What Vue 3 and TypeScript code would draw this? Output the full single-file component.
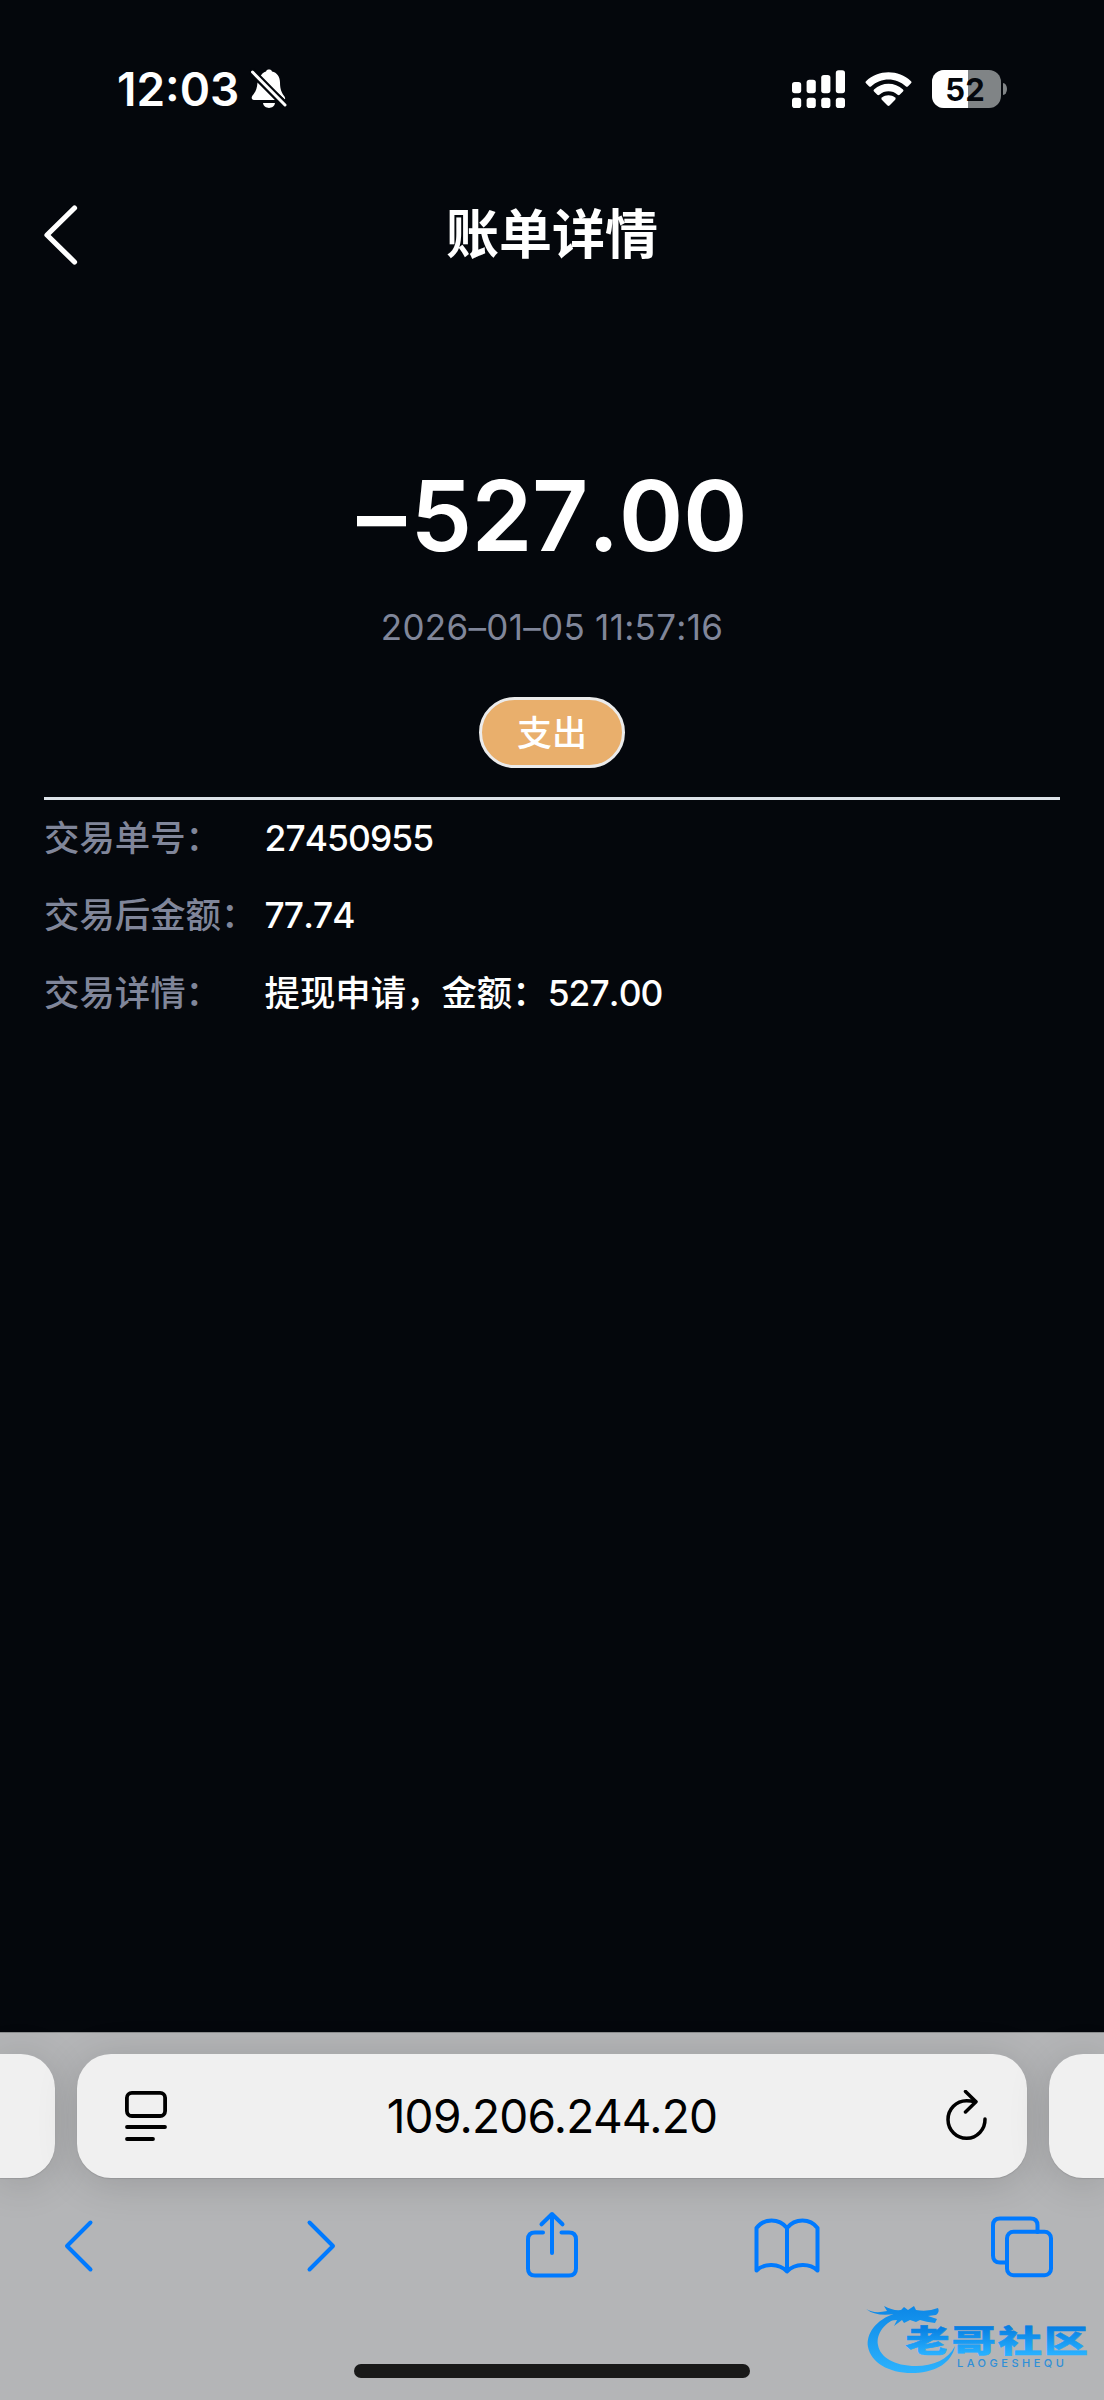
<template>
  <div class="page">
    <div class="status-bar">
      <div class="status-left">
        <span class="status-time">12:03</span>
        <svg
          class="icon-bell"
          width="40"
          height="42"
          viewBox="0 0 40 42"
        >
          <path
            d="M11 9.500C12 6 14.500 4 17 3.500C17.500 2 18.500 1.500 20 1.500S22.500 2 23 3.500C28 4.500 31 9 31 14.500C31 22 33 25 35.500 28.500Q36.500 30 36 31.500Z"
            fill="#fff"
          />
          <path
            d="M8.500 14.500L26 32H5C2.500 32 2 29.500 3.500 27.500C6.500 24 8 21 8.500 14.500Z"
            fill="#fff"
          />
          <path
            d="M14 35H26C25 41.500 15 41.500 14 35Z"
            fill="#fff"
          />
          <path
            d="M3.500 4L36 37"
            stroke="#04070c"
            stroke-width="7"
            stroke-linecap="round"
          />
          <path
            d="M3.500 4L36 37"
            stroke="#fff"
            stroke-width="3"
            stroke-linecap="round"
          />
        </svg>
      </div>
      <div class="status-right">
        <svg
          width="53"
          height="38"
          viewBox="0 0 53 38"
          fill="#fff"
        >
          <template
            v-for="(bar, idx) in signalBars"
            :key="idx"
          >
            <rect
              :x="idx * 14.6"
              :y="bar"
              width="9.2"
              :height="23.3 - bar"
              rx="2.8"
            />
            <rect
              :x="idx * 14.6"
              y="27.800"
              width="9.200"
              height="10.200"
              rx="2.800"
            />
          </template>
        </svg>
        <svg
          class="icon-wifi"
          width="47"
          height="35"
          viewBox="0 0 47 35"
          fill="#fff"
        >
          <path d="M1 9.200C13.500-2.700 33.500-2.700 46 9.200Q47 10.300 46 11.300L42.800 14.400Q41.800 15.300 40.700 14.300C31 5.200 16 5.200 6.300 14.300Q5.200 15.300 4.200 14.400L1 11.300Q0 10.300 1 9.200Z" />
          <path d="M9 17.400C17.200 9.800 29.800 9.800 38 17.400Q39 18.500 38 19.500L34.700 22.700Q33.700 23.600 32.600 22.700C27.500 18.200 19.500 18.200 14.400 22.700Q13.300 23.600 12.300 22.700L9 19.500Q8 18.500 9 17.400Z" />
          <path d="M16.900 25.600C20.700 22.500 26.300 22.500 30.100 25.600Q31.200 26.600 30.200 27.700L24.500 33.500Q23.500 34.400 22.500 33.500L16.800 27.700Q15.800 26.600 16.900 25.600Z" />
        </svg>
        <div class="battery">
          <div class="battery-body">
            <div
              class="battery-level"
              :style="{ width: `${batteryLevel}%` }"
            />
            <span class="battery-text">{{ batteryLevel }}</span>
          </div>
          <div class="battery-cap" />
        </div>
      </div>
    </div>

    <header class="nav">
      <svg
        class="nav-back"
        width="34"
        height="60"
        viewBox="0 0 34 60"
        fill="none"
        stroke="#fff"
        stroke-width="5.200"
        stroke-linecap="round"
        stroke-linejoin="round"
      >
        <path d="M30.500 3L3 30L30.500 57" />
      </svg>
      <h1 class="nav-title">账单详情</h1>
    </header>

    <main class="bill">
      <div class="bill-amount"><span class="amount-sign">–</span>{{ bill.amount }}</div>
      <div class="bill-time">{{ bill.time }}</div>
      <div class="bill-type">{{ bill.type }}</div>
      <div class="bill-detail">
        <div
          v-for="row in rows"
          :key="row.label"
          class="bill-row"
        >
          <span class="row-label">{{ row.label }}</span>
          <span v-if="row.text">{{ row.text }}</span>
          <span class="row-figure">{{ row.figure }}</span>
        </div>
      </div>
    </main>

    <footer class="browser">
      <div class="tabs">
        <div class="tab tab-prev" />
        <div class="tab tab-current">
          <svg
            width="42"
            height="52"
            viewBox="0 0 42 52"
            fill="none"
            stroke="#000"
            stroke-width="3.800"
            stroke-linecap="round"
          >
            <rect
              x="1.900"
              y="2.800"
              width="38.200"
              height="23.200"
              rx="5"
            />
            <path d="M2 37H40M2 49H28" />
          </svg>
          <span class="tab-host">{{ host }}</span>
          <svg
            width="42"
            height="52"
            viewBox="0 0 42 52"
            fill="none"
            stroke="#000"
            stroke-width="3.500"
            stroke-linecap="round"
            stroke-linejoin="round"
          >
            <path d="M19.500 1.500L30 11.800L19.500 22" />
            <path d="M39 29A18.500 18.800 0 1 1 20.500 10.700Q25 10.700 29 11.800" />
          </svg>
        </div>
        <div class="tab tab-next" />
      </div>

      <div class="toolbar">
        <svg
          width="30"
          height="68"
          viewBox="0 0 30 68"
        >
          <path d="M26.500 11.500L3 35L26.500 58.500" />
        </svg>
        <svg
          width="30"
          height="68"
          viewBox="0 0 30 68"
        >
          <path d="M3.500 11.500L27 35L3.500 58.500" />
        </svg>
        <svg
          class="icon-share"
          width="52"
          height="68"
          viewBox="0 0 52 68"
        >
          <path d="M17 21.500H9Q2 21.500 2 28.500V57.500Q2 64.500 9 64.500H43Q50 64.500 50 57.500V28.500Q50 21.500 43 21.500H35.500" />
          <path d="M26 42V3M15.500 13.300L26 3L36.500 13.300" />
        </svg>
        <svg
          class="icon-book"
          width="66"
          height="68"
          viewBox="0 0 66 68"
        >
          <path d="M33 17C25 7 10 7 2.500 17V59.500C10 52 25 52 33 60.500C41 52 56 52 63.500 59.500V17C56 7 41 7 33 17ZM33 17V60.500" />
        </svg>
        <svg
          class="icon-tabs"
          width="62"
          height="68"
          viewBox="0 0 62 68"
        >
          <path d="M16 51.500H9Q2 51.500 2 44.500V14.500Q2 7.500 9 7.500H39.500Q46.500 7.500 46.500 14.500V21" />
          <rect
            x="16"
            y="20.800"
            width="44"
            height="43.400"
            rx="6.500"
          />
        </svg>
      </div>

      <div class="home-indicator" />

      <svg
        class="community-logo"
        width="228"
        height="80"
        viewBox="0 0 228 80"
      >
        <defs>
          <linearGradient
            id="ringFill"
            gradientUnits="userSpaceOnUse"
            x1="0"
            y1="4"
            x2="0"
            y2="72"
          >
            <stop
              offset="0"
              stop-color="#0b86e6"
            />
            <stop
              offset="1"
              stop-color="#2cb2fd"
            />
          </linearGradient>
          <linearGradient
            id="nameFill"
            x1="0"
            y1="0.250"
            x2="0"
            y2="0.850"
          >
            <stop
              offset="0"
              stop-color="#077fe2"
            />
            <stop
              offset="1"
              stop-color="#27b0ff"
            />
          </linearGradient>
        </defs>
        <g fill="url(#ringFill)">
          <path d="M30 13C9 20 0 34 2 47C5 63 24 74 49 73C71 72 86 62 89 46C82 60 67 66 50 66C28 66 14 57 12 45C10 34 18 22 34 17Z" />
          <path d="M0 9Q8 14 21 11L18 6Q27 11 35 10L38 7L42 10L48 6L50 10Q62 12 72 8Q74 12 70 15L62 16L71 19L69 23Q60 22 54 20L50 22L44 20L38 23L36 20L28 26L31 20L20 21Q24 16 29 14Q10 17 0 9Z" />
        </g>
        <text
          class="logo-name"
          transform="translate(39.500 51.500) scale(1 0.690)"
          fill="url(#nameFill)"
          stroke="url(#nameFill)"
        >老哥社区</text>
        <text
          class="logo-latin"
          x="91"
          y="67"
        >LAOGESHEQU</text>
      </svg>
    </footer>
  </div>
</template>

<script setup lang="ts">
import { computed, ref } from 'vue';

interface Bill {
  amount: string;
  time: string;
  type: string;
  orderNo: string;
  balance: string;
}

const host = '109.206.244.20';
const batteryLevel = ref(52);

// 每格信号的顶部位置
const signalBars = [12, 9.8, 5, 0.3];

const bill = ref<Bill>({
  amount: '527.00',
  time: '2026–01–05 11:57:16',
  type: '支出',
  orderNo: '27450955',
  balance: '77.74',
});

const rows = computed(() => [
  { label: '交易单号：', text: '', figure: bill.value.orderNo },
  { label: '交易后金额：', text: '', figure: bill.value.balance },
  { label: '交易详情：', text: '提现申请，金额：', figure: bill.value.amount },
]);
</script>

<style>
body {
  background: #04070c;
}
</style>

<style scoped>
.page {
  display: flex;
  flex-direction: column;
  width: 1104px;
  height: 2400px;
  overflow: hidden;
  background: #04070c;
  color: #fff;
  font-family: Inter, "Noto Sans CJK SC", sans-serif;
}

.status-bar {
  display: flex;
  justify-content: space-between;
  align-items: center;
  height: 178px;
  padding: 0 97px 0 117px;
  flex-shrink: 0;
}

.status-left,
.status-right {
  display: flex;
  align-items: center;
}

.status-time {
  width: 132px;
  font-size: 46px;
  font-weight: 600;
  line-height: 60px;
  white-space: nowrap;
}

.icon-wifi {
  margin: 0 20px;
}

.battery {
  display: flex;
  align-items: center;
  gap: 2px;
}

.battery-body {
  position: relative;
  width: 69px;
  height: 38px;
  border-radius: 12px;
  background: #808486;
  overflow: hidden;
}

.battery-level {
  height: 100%;
  background: #fff;
}

.battery-text {
  position: absolute;
  inset: 0 3px 0 0;
  color: #04070c;
  font-size: 31px;
  font-weight: 700;
  line-height: 39px;
  text-align: center;
}

.battery-cap {
  width: 4px;
  height: 12px;
  border-radius: 0 4px 4px 0 / 0 6px 6px 0;
  background: #808486;
}

.nav {
  display: grid;
  grid-template-columns: 100px 1fr 100px;
  align-items: center;
  height: 114px;
  padding: 0 44px;
  flex-shrink: 0;
}

.nav-title {
  margin: 0;
  font-size: 53px;
  font-weight: 600;
  line-height: 71px;
  text-align: center;
}

.bill {
  display: flex;
  flex: 1;
  flex-direction: column;
  align-items: center;
  padding: 164px 44px 0;
  font-feature-settings: "calt" 0;
  font-kerning: none;
}

.bill-amount {
  font-size: 98px;
  font-weight: 600;
  line-height: 120px;
  letter-spacing: -0.5px;
}

.amount-sign {
  margin-right: 5px;
}

.bill-time {
  margin-top: 26px;
  color: #80869a;
  font-size: 35px;
  line-height: 50px;
  letter-spacing: 0.3px;
}

.bill-type {
  box-sizing: border-box;
  width: 146px;
  height: 71px;
  margin-top: 45px;
  border: 3px solid #ebebeb;
  border-radius: 36px;
  background: #e9af6c;
  font-size: 35px;
  font-weight: 500;
  line-height: 67px;
  text-align: center;
}

.bill-detail {
  align-self: stretch;
  margin-top: 29px;
  border-top: 3px solid #dce3e9;
}

.bill-row {
  display: flex;
  height: 77.3px;
  font-size: 35.4px;
  font-weight: 500;
  line-height: 78px;
  white-space: nowrap;
}

.row-label {
  width: 220.5px;
  color: #80869a;
}

.row-figure {
  letter-spacing: -0.9px;
}

.browser {
  position: relative;
  display: flex;
  flex-direction: column;
  align-items: center;
  box-sizing: border-box;
  height: 368px;
  padding-top: 21px;
  border-top: 1px solid #8b8d8e;
  background: #b4b5b7;
  flex-shrink: 0;
}

.tabs {
  display: grid;
  grid-template-columns: 55px 950px 55px;
  gap: 22px;
  width: 1104px;
  height: 124px;
}

.tab {
  border-radius: 34px;
  background: #f0f0f0;
  box-shadow: 0 5px 40px rgba(0, 0, 0, 0.15), 0 1px 1px rgba(0, 0, 0, 0.1);
}

.tab-prev {
  border-radius: 0 34px 34px 0;
}

.tab-next {
  border-radius: 34px 0 0 34px;
}

.tab-current {
  display: flex;
  justify-content: space-between;
  align-items: center;
  box-sizing: border-box;
  padding: 0 39px 0 48px;
  color: #000;
}

.tab-host {
  margin-right: 9px;
  font-size: 46px;
  line-height: 60px;
  letter-spacing: -0.75px;
}

.toolbar {
  display: grid;
  grid-template-columns: 242px 220px 228px 237px 62px;
  box-sizing: border-box;
  width: 1104px;
  margin-top: 33px;
  padding-left: 64px;
}

.toolbar svg {
  fill: none;
  stroke: #007aff;
  stroke-width: 4;
  stroke-linecap: round;
  stroke-linejoin: round;
}

.home-indicator {
  width: 396px;
  height: 14px;
  margin-top: 85px;
  border-radius: 7px;
  background: #191919;
}

/* 右下角社区标识，浮在工具栏上方 */
.community-logo {
  position: absolute;
  right: 10px;
  bottom: 20px;
}

.logo-name {
  font-family: "Noto Sans CJK SC", sans-serif;
  font-size: 44px;
  font-weight: 900;
  letter-spacing: 2.2px;
  stroke-width: 0.8;
}

.logo-latin {
  fill: #2f8fd8;
  font-size: 11px;
  font-weight: 500;
  letter-spacing: 3.5px;
}
</style>
